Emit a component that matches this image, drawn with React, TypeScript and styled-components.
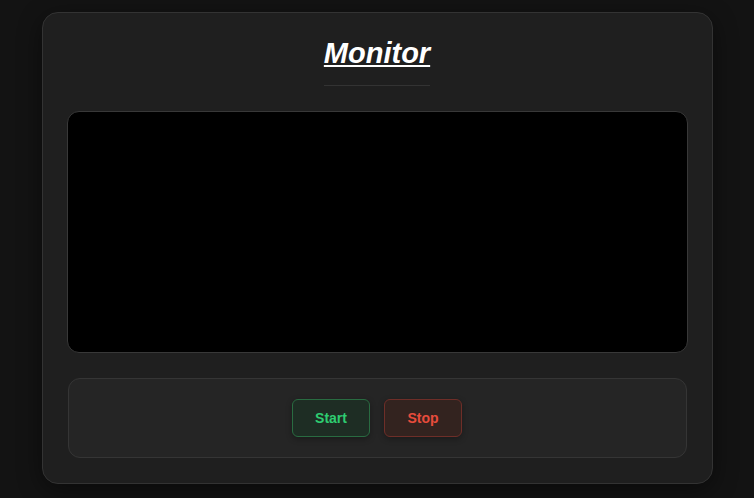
import React, { FC } from 'react';
import styled, { createGlobalStyle } from 'styled-components';

const GlobalStyle = createGlobalStyle`
  html, body {
    margin:0;
    padding:0;
    background:#131313;
    font-family:"Liberation Sans", Arial, sans-serif;
  }
  #root {
    min-height:100vh;
    padding-top:12px;
    box-sizing:border-box;
  }
`;

const Card = styled.main`
  width:671px;
  margin:0 auto;
  box-sizing:border-box;
  padding:24px 24px 25px;
  background:#1f1f1f;
  border:1px solid #333;
  border-radius:16px;
  box-shadow:0 6px 24px rgba(0, 0, 0, .45);
  display:flex;
  flex-direction:column;
  align-items:center;
  gap:25px;
`;

const Title = styled.h1`
  margin:0;
  padding-bottom:15px;
  border-bottom:1px solid #333;
  font-size:29px;
  font-weight:700;
  font-style:italic;
  text-decoration:underline;
  text-decoration-thickness:2px;
  text-underline-offset:2px;
  color:#fff;
`;

const Screen = styled.div`
  align-self:stretch;
  height:242px;
  box-sizing:border-box;
  background:#000;
  border:1px solid #383838;
  border-radius:12px;
`;

const Controls = styled.div`
  align-self:stretch;
  margin:0 1px;
  height:80px;
  box-sizing:border-box;
  background:#252525;
  border:1px solid #353535;
  border-radius:12px;
  display:flex;
  align-items:center;
  justify-content:center;
  gap:14px;
`;

const Button = styled.button<{ $tone: 'go' | 'halt' }>`
  width:78px;
  height:38px;
  border-radius:6px;
  font-family:inherit;
  font-size:14px;
  font-weight:700;
  cursor:pointer;
  box-shadow:0 2px 6px rgba(0, 0, 0, .3);
  color:${p => p.$tone === 'go' ? '#2ecc71' : '#e74c3c'};
  background:${p => p.$tone === 'go' ? '#1e2d24' : '#33231f'};
  border:1px solid ${p => p.$tone === 'go' ? '#296b41' : '#6e2e28'};
`;

const App: FC = () => (
  <>
    <GlobalStyle />
    <Card>
      <Title>Monitor</Title>
      <Screen />
      <Controls>
        <Button $tone='go'>Start</Button>
        <Button $tone='halt'>Stop</Button>
      </Controls>
    </Card>
  </>
);

export default App;
